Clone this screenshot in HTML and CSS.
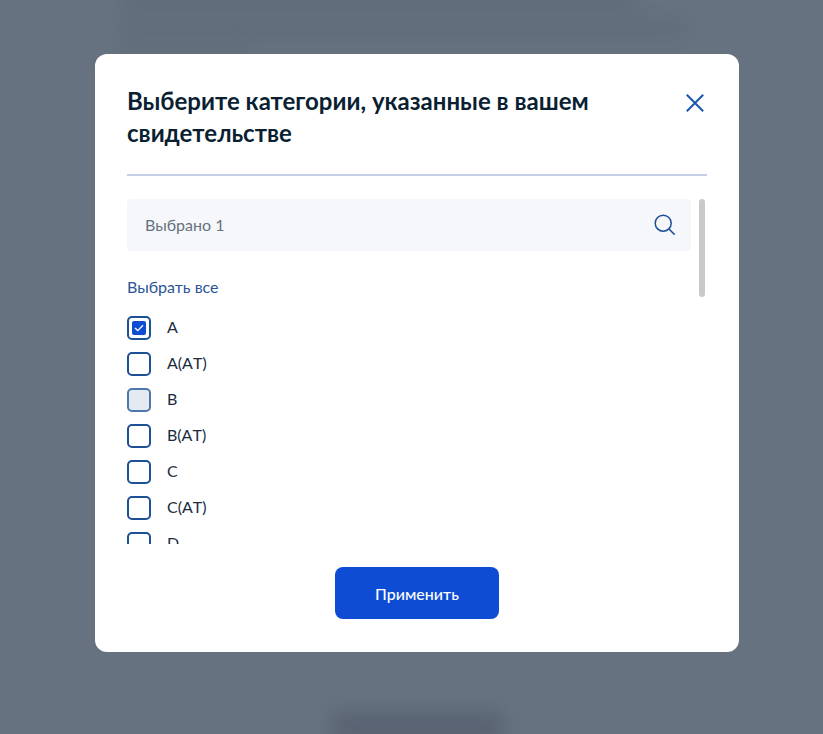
FILE: index.html
```html
<!DOCTYPE html>
<html lang="ru">
<head>
<meta charset="utf-8">
<title>Выберите категории</title>
<link rel="stylesheet" href="styles.css">
</head>
<body>
<div class="backdrop" aria-hidden="true">
  <div class="smear smear-a"></div>
  <div class="smear smear-b"></div>
  <div class="smear smear-c"></div>
  <div class="smear smear-d"></div>
</div>
<main class="modal">
  <header class="modal-head">
    <h1 class="modal-title">Выберите категории, указанные в вашем свидетельстве</h1>
    <svg class="close" viewBox="0 0 18 18" width="18" height="18"><path d="M.8.8 17.2 17.2M17.2.8.8 17.2"/></svg>
  </header>
  <div class="divider"></div>
  <div class="body">
    <div class="content">
      <div class="search">
        <span class="search-text">Выбрано 1</span>
        <svg class="search-icon" viewBox="0 0 22 22" width="22" height="22"><circle cx="9.2" cy="9.2" r="8"/><path d="M15 15 20.6 20.6"/></svg>
      </div>
      <div class="select-all">Выбрать все</div>
      <ul class="options">
        <li class="option"><span class="box box-checked"><span class="box-fill"><svg viewBox="0 0 10 8" width="10" height="8"><path d="M1 4 3.8 6.6 9 1.2"/></svg></span></span><span class="label">A</span></li>
        <li class="option"><span class="box"></span><span class="label">A(AT)</span></li>
        <li class="option"><span class="box box-disabled"></span><span class="label">B</span></li>
        <li class="option"><span class="box"></span><span class="label">B(AT)</span></li>
        <li class="option"><span class="box"></span><span class="label">C</span></li>
        <li class="option"><span class="box"></span><span class="label">C(AT)</span></li>
        <li class="option"><span class="box"></span><span class="label">D</span></li>
        <li class="option"><span class="box"></span><span class="label">D(AT)</span></li>
      </ul>
    </div>
    <div class="scrollbar"><div class="thumb"></div></div>
  </div>
  <div class="actions">
    <button class="apply" type="button">Применить</button>
  </div>
</main>
</body>
</html>
```

FILE: styles.css
```css
* { box-sizing: border-box; }
html, body { height: 100%; }
body {
  margin: 0;
  height: 734px;
  overflow: hidden;
  position: relative;
  background: #66727f;
  font-family: Lato, "Noto Sans", sans-serif;
  color: #0b1f33;
  padding: 54px 0 0 95px;
}
.backdrop { position: absolute; inset: 0; overflow: hidden; }
.smear { position: absolute; background: #5c6878; filter: blur(9px); opacity: .55; }
.smear-a { left: 120px; top: -10px; width: 520px; height: 22px; }
.smear-b { left: 120px; top: 20px; width: 565px; height: 18px; }
.smear-c { left: 120px; top: 44px; width: 130px; height: 12px; }
.smear-d { left: 333px; top: 712px; width: 170px; height: 30px; background: #566070; opacity: .8; }
.modal {
  position: relative;
  width: 644px;
  height: 598px;
  background: #fff;
  border-radius: 12px;
  padding: 31px 32px 32px;
  display: flex;
  flex-direction: column;
}
.modal-head { display: flex; justify-content: space-between; align-items: flex-start; }
.modal-title {
  margin: 0;
  width: 480px;
  font-size: 24px;
  line-height: 32px;
  font-weight: 700;
  color: #0b1f33;
}
.close { margin: 8.5px 3px 0 0; flex: none; }
.close path { fill: none; stroke: #1a55b0; stroke-width: 2; }
.divider { height: 2px; background: #c5d0e8; margin-top: 25px; }
.body { display: flex; gap: 8px; margin-top: 23px; height: 345px; overflow: hidden; }
.content { width: 564px; flex: none; }
.search {
  height: 52px;
  background: #f5f7fa;
  border-radius: 4px;
  padding: 0 15px 2px 18px;
  display: flex;
  align-items: center;
  justify-content: space-between;
}
.search-text { font-size: 16px; color: #66727f; }
.search-icon { margin-top: 2px; }
.search-icon circle, .search-icon path { fill: none; stroke: #1d5196; stroke-width: 1.5; }
.select-all { margin-top: 26px; font-size: 16px; line-height: 20px; color: #2a5596; }
.options { list-style: none; margin: 13px 0 0; padding: 0; }
.option { display: flex; align-items: center; gap: 16px; height: 36px; font-size: 16px; color: #1a2c3e; }
.label { padding-bottom: 4px; font-kerning: none; }
.box {
  width: 24px;
  height: 24px;
  flex: none;
  border: 2px solid #1d5196;
  border-radius: 5px;
  background: #fff;
  display: flex;
  align-items: center;
  justify-content: center;
}
.box-disabled { background: #e4e9f2; border-color: #4d78ab; }
.box-fill {
  width: 14px;
  height: 14px;
  border-radius: 2px;
  background: #0d4cd3;
  display: flex;
  align-items: center;
  justify-content: center;
}
.box-fill path { fill: none; stroke: #fff; stroke-width: 1.3; }
.scrollbar { width: 6px; flex: none; }
.thumb { height: 98px; width: 6px; background: #c9c9c9; border-radius: 3px; }
.actions { display: flex; justify-content: center; margin-top: 23px; }
.apply {
  width: 164px;
  height: 52px;
  border: 0;
  border-radius: 8px;
  background: #0d4cd3;
  color: #fff;
  font-family: inherit;
  font-size: 16px;
  font-weight: 500;
}
```
